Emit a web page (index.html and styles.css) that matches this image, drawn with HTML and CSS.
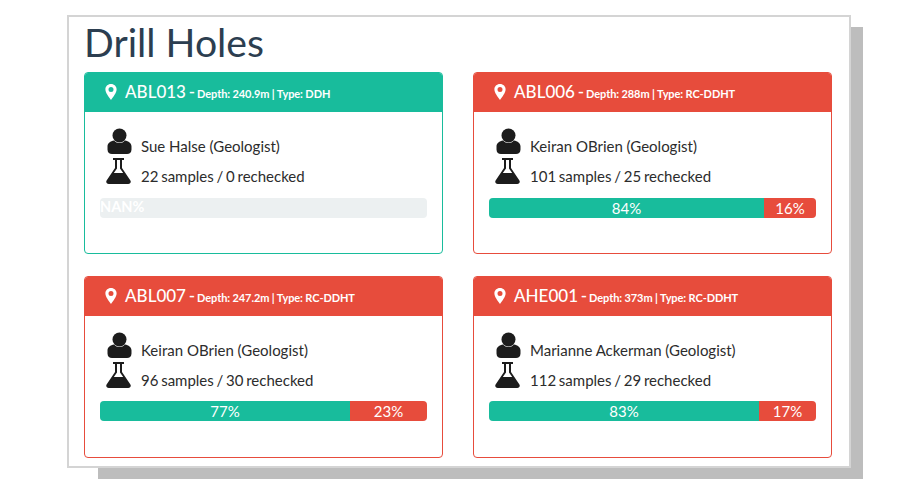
FILE: index.html
```html
<!DOCTYPE html>
<html lang="en">
<head>
<meta charset="utf-8">
<title>Drill Holes</title>
<link rel="stylesheet" href="styles.css">
</head>
<body>
<svg class="defs" width="0" height="0" aria-hidden="true">
  <symbol id="pin" viewBox="0 0 12 16"><path fill-rule="evenodd" d="M6 0C2.700 0 .4 2.400.4 5.500.4 8.700 3.800 13 6 16c2.200-3 5.600-7.300 5.600-10.500C11.600 2.400 9.300 0 6 0zm0 3.100a2.500 2.500 0 1 1 0 5 2.500 2.500 0 0 1 0-5z"/></symbol>
  <symbol id="person" viewBox="0 0 24 26"><circle cx="12" cy="7.500" r="7"/><path d="M6.500 12.500C3 13 0 15 0 18.500v3C0 24.500 2 26 4.500 26h15c2.500 0 4.500-1.500 4.500-4.500v-3c0-3.500-3-5.500-6.500-6-1.500 1.700-3.300 2.500-5.500 2.500s-4-.8-5.500-2.500z"/></symbol>
  <symbol id="flask" viewBox="0 0 25 26"><path fill-rule="evenodd" d="M7 0h11v2h-2v8l8.400 12.500c1 1.800-.1 3.500-2.200 3.500H2.800C.7 26-.4 24.300.6 22.500L9 10V2H7zm4 2v8.600L7.800 15h9.400L14 10.600V2z"/></symbol>
</svg>
<main class="frame">
  <h1 class="title">Drill Holes</h1>
  <div class="grid">
    <section class="card card-ok">
      <header class="head"><svg class="pin"><use href="#pin"/></svg><span class="hole">ABL013 -</span><small class="meta">Depth: 240.9m | Type: DDH</small></header>
      <div class="body">
        <div class="line line-person"><svg class="ico-person"><use href="#person"/></svg><span>Sue Halse (Geologist)</span></div>
        <div class="line line-flask"><svg class="ico-flask"><use href="#flask"/></svg><span>22 samples / 0 rechecked</span></div>
        <div class="bar"><span class="nan">NAN%</span></div>
      </div>
    </section>
    <section class="card card-bad">
      <header class="head"><svg class="pin"><use href="#pin"/></svg><span class="hole">ABL006 -</span><small class="meta">Depth: 288m | Type: RC-DDHT</small></header>
      <div class="body">
        <div class="line line-person"><svg class="ico-person"><use href="#person"/></svg><span>Keiran OBrien (Geologist)</span></div>
        <div class="line line-flask"><svg class="ico-flask"><use href="#flask"/></svg><span>101 samples / 25 rechecked</span></div>
        <div class="bar"><span class="seg seg-ok" style="width:84.1%">84%</span><span class="seg seg-bad" style="width:15.9%">16%</span></div>
      </div>
    </section>
    <section class="card card-bad">
      <header class="head"><svg class="pin"><use href="#pin"/></svg><span class="hole">ABL007 -</span><small class="meta">Depth: 247.2m | Type: RC-DDHT</small></header>
      <div class="body">
        <div class="line line-person"><svg class="ico-person"><use href="#person"/></svg><span>Keiran OBrien (Geologist)</span></div>
        <div class="line line-flask"><svg class="ico-flask"><use href="#flask"/></svg><span>96 samples / 30 rechecked</span></div>
        <div class="bar"><span class="seg seg-ok" style="width:76.5%">77%</span><span class="seg seg-bad" style="width:23.5%">23%</span></div>
      </div>
    </section>
    <section class="card card-bad">
      <header class="head"><svg class="pin"><use href="#pin"/></svg><span class="hole">AHE001 -</span><small class="meta">Depth: 373m | Type: RC-DDHT</small></header>
      <div class="body">
        <div class="line line-person"><svg class="ico-person"><use href="#person"/></svg><span>Marianne Ackerman (Geologist)</span></div>
        <div class="line line-flask"><svg class="ico-flask"><use href="#flask"/></svg><span>112 samples / 29 rechecked</span></div>
        <div class="bar"><span class="seg seg-ok" style="width:82.6%">83%</span><span class="seg seg-bad" style="width:17.4%">17%</span></div>
      </div>
    </section>
  </div>
</main>
</body>
</html>
```
FILE: styles.css
```css
* { box-sizing: border-box; }
html { margin: 0; padding: 0; background: #fff; }
body { margin: 0; height: 486px; overflow: hidden; font-family: Lato, "Open Sans", sans-serif; color: #2c2c2c; }
.defs { position: absolute; }
.frame {
  position: relative;
  width: 784px;
  height: 453px;
  margin: 15px 0 0 67px;
  padding: 0 15px;
  background: #fff;
  border: 2px solid #d4d4d4;
}
.frame::before {
  content: "";
  position: absolute;
  z-index: -1;
  left: 29px;
  top: 10px;
  width: 765px;
  height: 452px;
  background: #bdbdbd;
}
.title {
  margin: 0;
  height: 55px;
  font-size: 39.2px;
  font-weight: 400;
  line-height: 50px;
  color: #2c3e50;
}
.grid { display: grid; grid-template-columns: 359px 359px; column-gap: 30px; row-gap: 22px; }
.card { height: 182px; border: 1px solid; border-radius: 4px; overflow: hidden; }
.card-ok { border-color: #18bc9c; }
.card-bad { border-color: #e74c3c; }
.head { display: flex; align-items: center; height: 39px; padding-left: 20px; color: #fff; }
.card-ok .head { background: #18bc9c; }
.card-bad .head { background: #e74c3c; }
.pin { width: 12px; height: 16px; fill: #fff; margin: -2px 8px 0 0; }
.hole { font-size: 17px; font-weight: 500; margin-top: -2px; word-spacing: -1.5px; }
.meta { font-size: 11px; margin-left: 2px; font-weight: 700; padding-top: 1px; letter-spacing: -.1px; }
.body { padding: 15px 15px 0; font-size: 15px; }
.line { display: flex; align-items: flex-end; padding-left: 6px; }
.line span { margin-left: 10px; }
.line-person { height: 28px; }
.line-person span { margin-left: 9px; }
.line-flask { height: 30px; word-spacing: -1.1px; }
.ico-person { width: 25px; height: 26px; margin: 0 0 1px 1px; fill: #1c1c1c; }
.ico-flask { width: 25px; height: 26px; margin-bottom: 1px; fill: #1c1c1c; }
.bar { display: flex; height: 20px; margin-top: 13px; background: #ecf0f1; border-radius: 4px; overflow: hidden; font-size: 15px; color: #fff; line-height: 20px; }
.card:nth-child(n+3) .bar { margin-top: 12px; }
.nan { font-size: 14.5px; line-height: 18px; font-weight: 700; }
.seg { display: block; text-align: center; }
.seg-ok { background: #18bc9c; }
.seg-bad { background: #e74c3c; }
```
